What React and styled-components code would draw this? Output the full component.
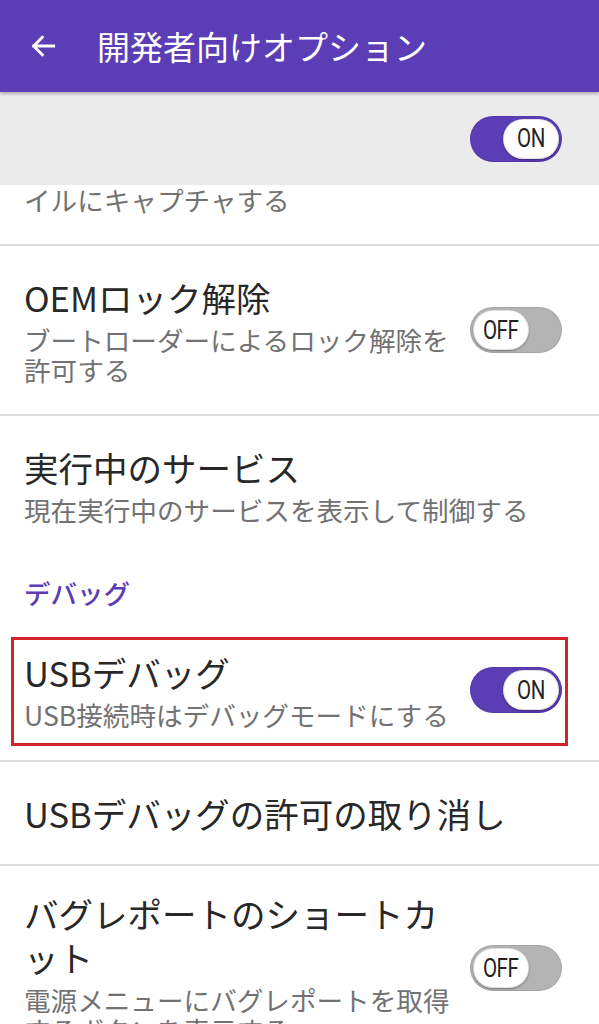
import React from 'react';
import styled, { createGlobalStyle } from 'styled-components';

const Global = createGlobalStyle`
  html, body {
    margin: 0;
    padding: 0;
    background: #fff;
    overflow: hidden;
  }
  body {
    font-family: "Noto Sans CJK JP", Roboto, sans-serif;
  }
`;

const Screen = styled.div`
  width: 599px;
  height: 1024px;
  overflow: hidden;
  background: #fff;
`;

const AppBar = styled.header`
  height: 92px;
  background: #5b3db5;
  display: flex;
  align-items: center;
  padding-left: 27px;
  box-shadow: 0 2px 3px rgba(0, 0, 0, 0.25);
  position: relative;
  z-index: 2;
`;

const BackIcon = styled.svg`
  width: 32px;
  height: 32px;
  flex: none;
`;

const AppTitle = styled.h1`
  margin: 0 0 0 38px;
  font-size: 33px;
  font-weight: 400;
  color: #fff;
  line-height: 44px;
`;

const MasterBar = styled.div`
  height: 93px;
  background: #ebebeb;
  display: flex;
  align-items: center;
  justify-content: flex-end;
  padding-right: 37px;
`;

const Row = styled.div`
  display: flex;
  align-items: center;
  gap: 16px;
  padding: ${p => p.$top ?? 29}px 37px 29px 24px;
  border-bottom: ${p => (p.$divider ? '2px solid #dcdcdc' : 'none')};
`;

const Texts = styled.div`
  flex: 1;
  min-width: 0;
`;

const Title = styled.div`
  font-size: 34.5px;
  line-height: 44px;
  color: #282828;
`;

const Summary = styled.div`
  font-size: 26.6px;
  line-height: 30px;
  color: #727272;
  margin-top: ${p => (p.$flush ? 0 : 6)}px;
`;

const Category = styled.div`
  padding: 24px 24px 29px;
  font-size: 26.5px;
  line-height: 30px;
  font-weight: 500;
  color: #5b3db5;
`;

const HighlightWrap = styled.div`
  padding: 0 31px 14px 11px;
  border-bottom: 2px solid #dcdcdc;
`;

const Highlight = styled.div`
  display: flex;
  align-items: center;
  gap: 16px;
  border: 3px solid #d3232b;
  padding: 10px 3px 13px 10px;
`;

const Track = styled.div`
  flex: none;
  width: 92px;
  height: 46px;
  border-radius: 23px;
  background: ${p => (p.$on ? '#5b3db5' : '#b4b4b4')};
  display: flex;
  align-items: center;
  justify-content: ${p => (p.$on ? 'flex-end' : 'flex-start')};
  padding: 0 3px;
  box-sizing: border-box;
  box-shadow: inset 0 0 0 1px rgba(0, 0, 0, 0.08);
`;

const Thumb = styled.div`
  width: 56px;
  height: 40px;
  border-radius: 20px;
  background: #fff;
  display: flex;
  align-items: center;
  justify-content: center;
  box-shadow: 0 1px 2px rgba(0, 0, 0, 0.35), inset 0 0 0 1px rgba(0, 0, 0, 0.12);
`;

const ThumbLabel = styled.span`
  display: inline-block;
  font-family: Roboto, "Liberation Sans", sans-serif;
  font-size: 25px;
  color: #222;
  transform: scaleX(0.82);
  letter-spacing: -0.5px;
`;

const Switch = ({ on }) => (
  <Track $on={on}>
    <Thumb>
      <ThumbLabel>{on ? 'ON' : 'OFF'}</ThumbLabel>
    </Thumb>
  </Track>
);

export default function App() {
  return (
    <Screen>
      <Global />
      <AppBar>
        <BackIcon viewBox="0 0 24 24">
          <path d="M20 12H5M11.5 5.5L5 12l6.5 6.5" fill="none" stroke="#fff" strokeWidth="2.1" strokeLinecap="square" />
        </BackIcon>
        <AppTitle>開発者向けオプション</AppTitle>
      </AppBar>

      <MasterBar>
        <Switch on />
      </MasterBar>

      <Row $top={0} $divider>
        <Texts>
          <Summary $flush>イルにキャプチャする</Summary>
        </Texts>
      </Row>

      <Row $divider>
        <Texts>
          <Title>OEMロック解除</Title>
          <Summary>ブートローダーによるロック解除を許可する</Summary>
        </Texts>
        <Switch on={false} />
      </Row>

      <Row>
        <Texts>
          <Title>実行中のサービス</Title>
          <Summary>現在実行中のサービスを表示して制御する</Summary>
        </Texts>
      </Row>

      <Category>デバッグ</Category>

      <HighlightWrap>
        <Highlight>
          <Texts>
            <Title>USBデバッグ</Title>
            <Summary>USB接続時はデバッグモードにする</Summary>
          </Texts>
          <Switch on />
        </Highlight>
      </HighlightWrap>

      <Row $divider>
        <Texts>
          <Title>USBデバッグの許可の取り消し</Title>
        </Texts>
      </Row>

      <Row $top={25}>
        <Texts>
          <Title>バグレポートのショートカット</Title>
          <Summary>電源メニューにバグレポートを取得するボタンを表示する</Summary>
        </Texts>
        <Switch on={false} />
      </Row>
    </Screen>
  );
}
